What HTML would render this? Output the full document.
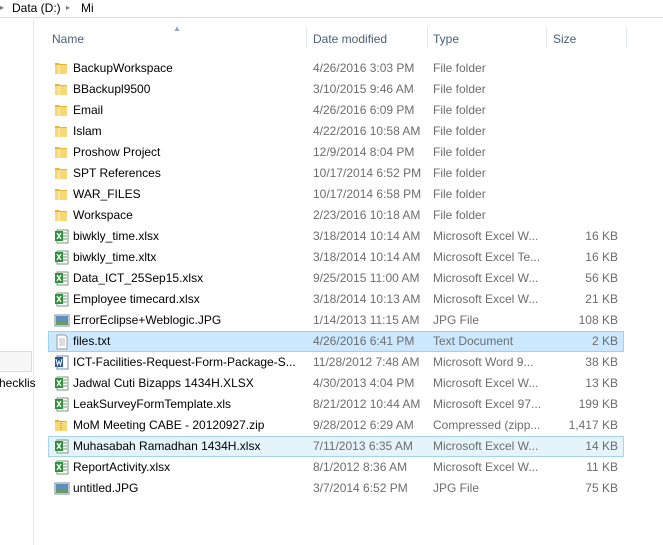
<!DOCTYPE html>
<html><head><meta charset="utf-8"><style>
*{margin:0;padding:0;box-sizing:border-box}
body{width:663px;height:545px;background:#fff;font-family:"Liberation Sans",sans-serif;font-size:12px;position:relative;overflow:hidden}
.a{position:absolute;white-space:nowrap}
.top{left:0;top:0;width:663px;height:18px;border-bottom:1px solid #d9d9d9}
.hd{color:#4c607a;top:32px}
.sep{position:absolute;top:26px;width:1px;height:22px;background:#e3e8ef}
.r{position:absolute;left:0;width:663px;height:21px;line-height:21px;margin-top:1px}
.r .n{position:absolute;left:73px;color:#000}
.r .d{position:absolute;left:313px;color:#6d6d6d}
.r .t{position:absolute;left:433px;color:#6d6d6d}
.r .s{position:absolute;right:45px;color:#6d6d6d}
.r svg{position:absolute;left:54px;top:3px}
.sel{position:absolute;left:48px;width:576px;height:21px;margin-top:1px}
</style></head><body>
<div class="a top"></div>
<div class="a" style="left:0;top:3px;color:#777;font-size:8px">&#9656;</div>
<div class="a" style="left:12px;top:1px;color:#000">Data (D:)</div>
<div class="a" style="left:66px;top:3px;color:#777;font-size:8px">&#9656;</div>
<div class="a" style="left:81px;top:1px;color:#000">Mi</div>
<div class="a" style="left:33px;top:19px;width:1px;height:526px;background:#eaeaea"></div>
<div class="a" style="left:0;top:351px;width:32px;height:21px;background:#f7f7f7;border:1px solid #dcdcdc;border-left:none"></div>
<div class="a" style="left:-1px;top:376px;color:#000">hecklis</div>
<div class="a" style="left:173px;top:24px;color:#8aa3c2;font-size:8px">&#9650;</div>
<div class="a hd" style="left:52px">Name</div>
<div class="sep" style="left:306px"></div>
<div class="a hd" style="left:313px">Date modified</div>
<div class="sep" style="left:427px"></div>
<div class="a hd" style="left:433px">Type</div>
<div class="sep" style="left:546px"></div>
<div class="a hd" style="left:553px">Size</div>
<div class="sep" style="left:626px"></div>
<div class="sel" style="top:330px;background:#cce8ff;border:1px solid #99d1ff"></div>
<div class="sel" style="top:435px;background:#e5f3fb;border:1px solid #a5d4ee"></div>
<svg width="0" height="0" style="position:absolute"><defs>
<g id="fo"><path d="M1 2h4l1 1h7v10H1z" fill="#e8b53c"/><path d="M1 4h12v9H1z" fill="#f8d775"/><path d="M4 4h2v9H4z" fill="#fbe7a1"/></g>
<g id="xl"><rect x="3" y="1" width="11" height="13" fill="#fff" stroke="#7a9a7a"/><path d="M9 4h4M9 7h4M9 10h4" stroke="#6a9a6a"/><rect x="1" y="2" width="8" height="10" fill="#2e8f3e"/><path d="M3 4l4 6M7 4l-4 6" stroke="#fff" stroke-width="1.3"/></g>
<g id="jp"><rect x="1" y="2" width="14" height="11" fill="#fff" stroke="#7a8a9a"/><rect x="2" y="3" width="12" height="9" fill="#5c8fc0"/><path d="M2 9l4-2 3 2 5-2v5H2z" fill="#6a9a6a"/></g>
<g id="tx"><path d="M3 1h8l2 2v12H3z" fill="#fff" stroke="#9a9a9a"/><path d="M5 5h6M5 7h6M5 9h6M5 11h6" stroke="#bbb"/></g>
<g id="wd"><rect x="3" y="1" width="11" height="13" fill="#fff" stroke="#7a8aaa"/><rect x="1" y="2" width="8" height="10" fill="#2b579a"/><path d="M2 4l1.5 6 1.5-4 1.5 4 1.5-6" stroke="#fff" fill="none"/></g>
<g id="zp"><path d="M1 2h4l1 1h7v10H1z" fill="#e8b53c"/><path d="M1 4h12v9H1z" fill="#f8d775"/><path d="M7 3v10" stroke="#888" stroke-dasharray="1 1"/></g>
</defs></svg>
<div class="r" style="top:57px"><svg width="16" height="16"><use href="#fo"/></svg><span class="n">BackupWorkspace</span><span class="d">4/26/2016 3:03 PM</span><span class="t">File folder</span></div>
<div class="r" style="top:78px"><svg width="16" height="16"><use href="#fo"/></svg><span class="n">BBackupl9500</span><span class="d">3/10/2015 9:46 AM</span><span class="t">File folder</span></div>
<div class="r" style="top:99px"><svg width="16" height="16"><use href="#fo"/></svg><span class="n">Email</span><span class="d">4/26/2016 6:09 PM</span><span class="t">File folder</span></div>
<div class="r" style="top:120px"><svg width="16" height="16"><use href="#fo"/></svg><span class="n">Islam</span><span class="d">4/22/2016 10:58 AM</span><span class="t">File folder</span></div>
<div class="r" style="top:141px"><svg width="16" height="16"><use href="#fo"/></svg><span class="n">Proshow Project</span><span class="d">12/9/2014 8:04 PM</span><span class="t">File folder</span></div>
<div class="r" style="top:162px"><svg width="16" height="16"><use href="#fo"/></svg><span class="n">SPT References</span><span class="d">10/17/2014 6:52 PM</span><span class="t">File folder</span></div>
<div class="r" style="top:183px"><svg width="16" height="16"><use href="#fo"/></svg><span class="n">WAR_FILES</span><span class="d">10/17/2014 6:58 PM</span><span class="t">File folder</span></div>
<div class="r" style="top:204px"><svg width="16" height="16"><use href="#fo"/></svg><span class="n">Workspace</span><span class="d">2/23/2016 10:18 AM</span><span class="t">File folder</span></div>
<div class="r" style="top:225px"><svg width="16" height="16"><use href="#xl"/></svg><span class="n">biwkly_time.xlsx</span><span class="d">3/18/2014 10:14 AM</span><span class="t">Microsoft Excel W...</span><span class="s">16 KB</span></div>
<div class="r" style="top:246px"><svg width="16" height="16"><use href="#xl"/></svg><span class="n">biwkly_time.xltx</span><span class="d">3/18/2014 10:14 AM</span><span class="t">Microsoft Excel Te...</span><span class="s">16 KB</span></div>
<div class="r" style="top:267px"><svg width="16" height="16"><use href="#xl"/></svg><span class="n">Data_ICT_25Sep15.xlsx</span><span class="d">9/25/2015 11:00 AM</span><span class="t">Microsoft Excel W...</span><span class="s">56 KB</span></div>
<div class="r" style="top:288px"><svg width="16" height="16"><use href="#xl"/></svg><span class="n">Employee timecard.xlsx</span><span class="d">3/18/2014 10:13 AM</span><span class="t">Microsoft Excel W...</span><span class="s">21 KB</span></div>
<div class="r" style="top:309px"><svg width="16" height="16"><use href="#jp"/></svg><span class="n">ErrorEclipse+Weblogic.JPG</span><span class="d">1/14/2013 11:15 AM</span><span class="t">JPG File</span><span class="s">108 KB</span></div>
<div class="r" style="top:330px"><svg width="16" height="16"><use href="#tx"/></svg><span class="n">files.txt</span><span class="d">4/26/2016 6:41 PM</span><span class="t">Text Document</span><span class="s">2 KB</span></div>
<div class="r" style="top:351px"><svg width="16" height="16"><use href="#wd"/></svg><span class="n">ICT-Facilities-Request-Form-Package-S...</span><span class="d">11/28/2012 7:48 AM</span><span class="t">Microsoft Word 9...</span><span class="s">38 KB</span></div>
<div class="r" style="top:372px"><svg width="16" height="16"><use href="#xl"/></svg><span class="n">Jadwal Cuti Bizapps 1434H.XLSX</span><span class="d">4/30/2013 4:04 PM</span><span class="t">Microsoft Excel W...</span><span class="s">13 KB</span></div>
<div class="r" style="top:393px"><svg width="16" height="16"><use href="#xl"/></svg><span class="n">LeakSurveyFormTemplate.xls</span><span class="d">8/21/2012 10:44 AM</span><span class="t">Microsoft Excel 97...</span><span class="s">199 KB</span></div>
<div class="r" style="top:414px"><svg width="16" height="16"><use href="#zp"/></svg><span class="n">MoM Meeting CABE - 20120927.zip</span><span class="d">9/28/2012 6:29 AM</span><span class="t">Compressed (zipp...</span><span class="s">1,417 KB</span></div>
<div class="r" style="top:435px"><svg width="16" height="16"><use href="#xl"/></svg><span class="n">Muhasabah Ramadhan 1434H.xlsx</span><span class="d">7/11/2013 6:35 AM</span><span class="t">Microsoft Excel W...</span><span class="s">14 KB</span></div>
<div class="r" style="top:456px"><svg width="16" height="16"><use href="#xl"/></svg><span class="n">ReportActivity.xlsx</span><span class="d">8/1/2012 8:36 AM</span><span class="t">Microsoft Excel W...</span><span class="s">11 KB</span></div>
<div class="r" style="top:477px"><svg width="16" height="16"><use href="#jp"/></svg><span class="n">untitled.JPG</span><span class="d">3/7/2014 6:52 PM</span><span class="t">JPG File</span><span class="s">75 KB</span></div>
</body></html>
